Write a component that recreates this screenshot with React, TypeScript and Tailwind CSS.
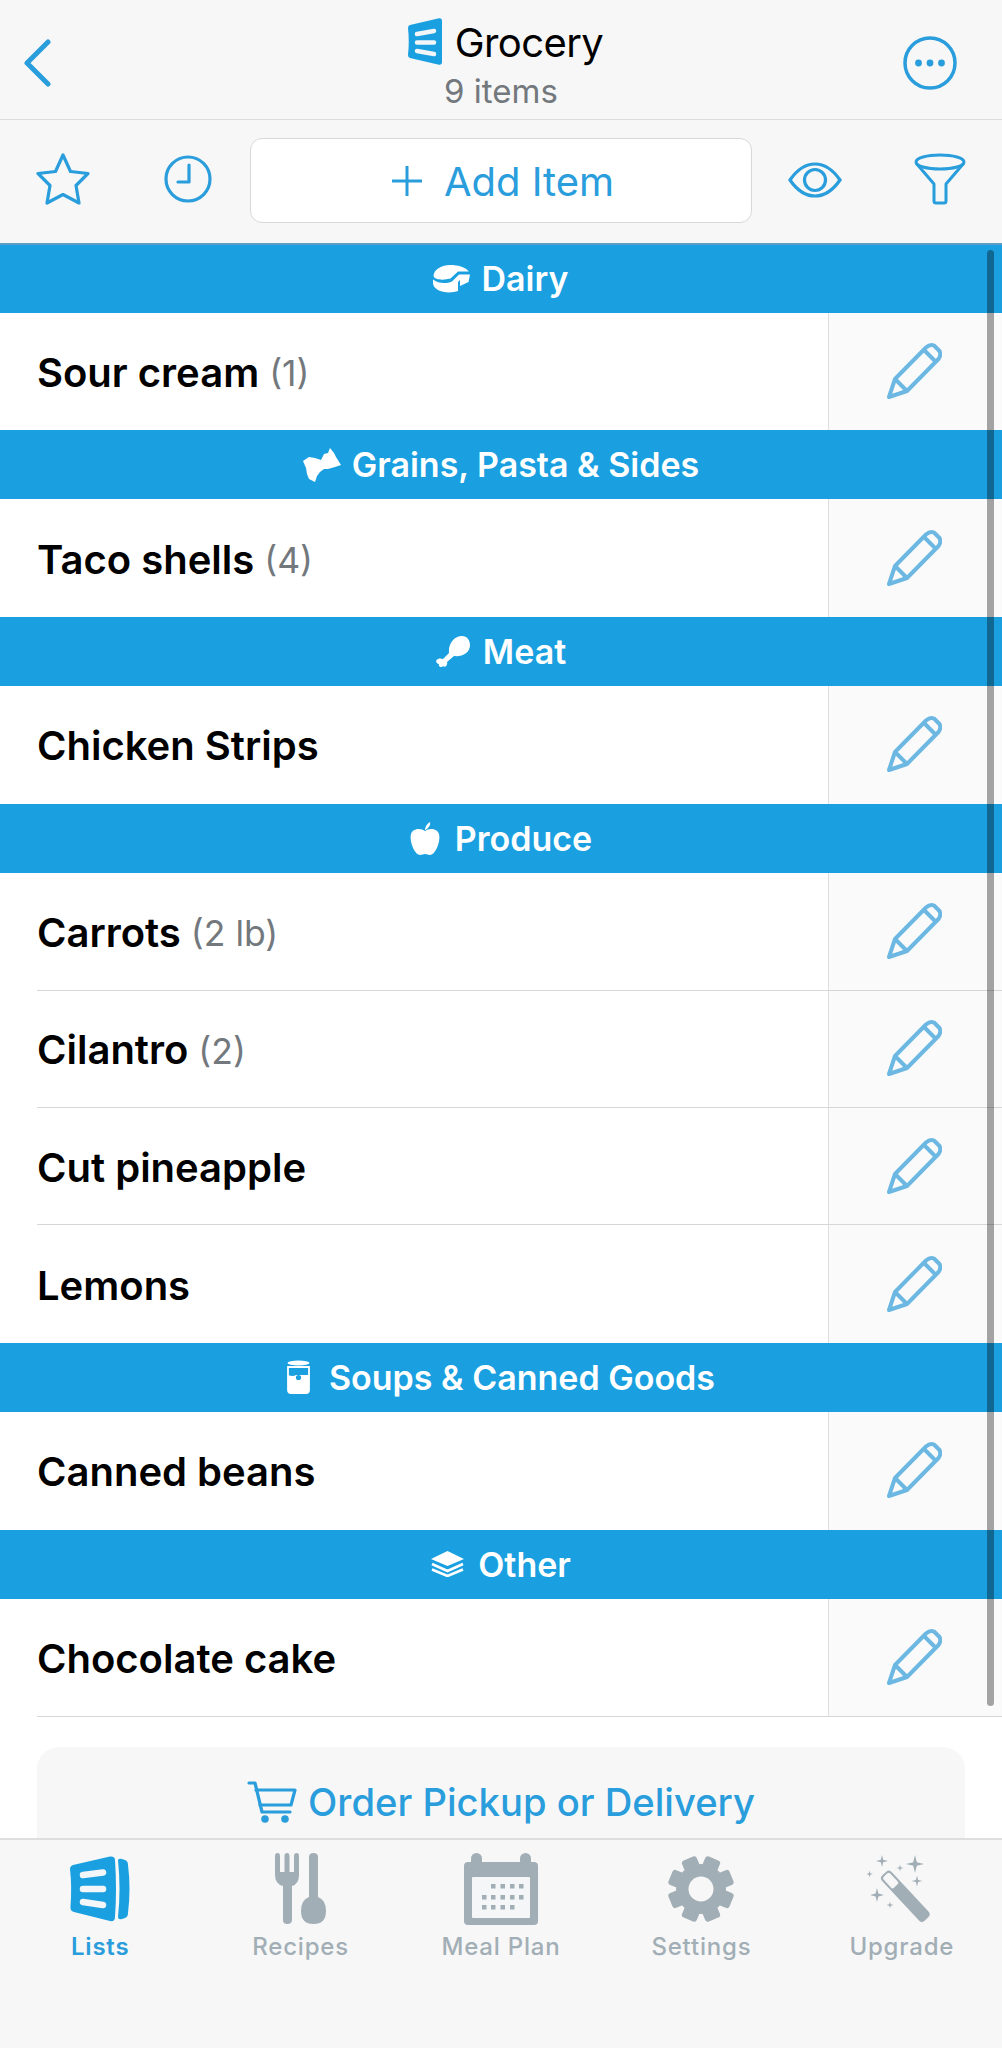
import React from "react";

const BLUE = "#2A9DDC";

function Logo() {
  return (
    <svg width="34" height="47" viewBox="0 0 34 47">
      <path d="M2 7 L31 0.3 Q34 0 34 3 Q35.5 23 34 44 Q34 47 31 46.7 L2 40 Q0 39.5 0 37 Q1.5 24 0 10 Q0 7.5 2 7Z" fill="#1AA0E0" />
      <path d="M9 16 L26 13 M9 24.5 H26 M9 33 L26 36" stroke="#F2F6F8" strokeWidth="4.5" strokeLinecap="round" fill="none" />
    </svg>
  );
}

function Pencil() {
  return (
    <svg width="55" height="56" viewBox="0 0 55 56" fill="none" stroke="#6CB8E3" strokeWidth="4" strokeLinejoin="round">
      <path d="M2 54 L8 36 L39 4.5 Q43 1 47 2.5 L52.5 8 Q54.5 12 51.5 16 L20 48 Z" />
      <path d="M8 36 L20 48 M37 7 L49.5 19.5" />
    </svg>
  );
}

function Cheese() {
  return (
    <svg width="37" height="28" viewBox="0 0 37 28">
      <path d="M0.5 11 C1 4 9 0 17 0 C25 0 32 2 36 6.5 L25 6.5 L17.5 13.5 C10 15.5 2 15 0.5 11Z" fill="#fff" />
      <path d="M0 14.5 C5 18.5 13 19 19 16.5 L26 9.5 L37 9.5 L35.5 17 L27 21 L27 15 L25 17 L25 26 C20 28 10 28 5 25 C2 23 0 21 0 18Z" fill="#fff" />
    </svg>
  );
}

function Bow() {
  return (
    <svg width="38" height="34" viewBox="0 0 38 34">
      <path d="M0 13 L6 9 L12 10 L18 12 L21 6 L25 5 L27 0 L31 5 L33 9 L38 17 L32 19 L25 21 L21 21 L17 24 L14 28 L12 34 L6 31 L4 26 L3 20Z" fill="#fff" />
    </svg>
  );
}

function Drumstick() {
  return (
    <svg width="34" height="32" viewBox="0 0 34 32">
      <path d="M13 17 C12 8 18 0 26 0 C31 0 34 4 34 9 C34 17 26 21 18 20 L11 26 C12 29 9 32 7 30 C6 32 2 31 3 28 C0 28 -1 24 2 23 C4 22 6 23 7 23Z" fill="#fff" />
    </svg>
  );
}

function Apple() {
  return (
    <svg width="30" height="33" viewBox="0 0 30 33">
      <path d="M15 7 C16 3 18 1 20 0 C21 3 18 7 15 8Z" fill="#fff" />
      <path d="M15 9 C19 6 27 6 29 12 C31 20 25 33 20 33 C18 33 17 32 15 32 C13 32 12 33 10 33 C5 33 -1 20 1 12 C3 6 11 6 15 9Z" fill="#fff" />
    </svg>
  );
}

function Can() {
  return (
    <svg width="23" height="34" viewBox="0 0 23 34">
      <ellipse cx="11.5" cy="3" rx="11" ry="2.6" fill="#fff" />
      <path d="M1 7 H22 V30 Q22 33 19 33 H4 Q1 33 1 30Z" fill="none" stroke="#fff" strokeWidth="1.8" />
      <path d="M1 15 Q6 17 9 15 H22 V30 Q22 33 19 33 H4 Q1 33 1 30Z" fill="#fff" />
      <circle cx="11.5" cy="17.5" r="2.6" fill="#1AA0E0" />
    </svg>
  );
}

function Layers() {
  return (
    <svg width="33" height="26" viewBox="0 0 33 26">
      <path d="M16.5 0 L33 8 L16.5 15 L0 8Z" fill="#fff" />
      <path d="M1 13 L16.5 20 L32 13 M1 18.5 L16.5 25 L32 18.5" stroke="#fff" strokeWidth="2.6" fill="none" />
    </svg>
  );
}

function Section({ icon, label, gap, first }: { icon: React.ReactNode; label: string; gap: string; first?: boolean }) {
  return (
    <div className={`h-[69.5px] bg-[#1AA0E0] flex items-center justify-center text-white font-semibold text-[34px] leading-none ${gap} ${first ? "border-t-2 border-[#5E9DC5]" : ""}`}>
      {icon}
      <span className={first ? "" : "mt-[1px]"}>{label}</span>
    </div>
  );
}

function Row({ name, qty, divider }: { name: string; qty?: string; divider?: boolean }) {
  return (
    <div className="h-[117.4px] bg-white flex pl-[37px]">
      <div className={`flex-1 flex items-center pt-[3px] ${divider ? "border-b border-[#d4d6d8]" : ""}`}>
        <span className="text-[40px] font-semibold text-black leading-none">{name}</span>
        {qty && <span className="text-[35.5px] text-[#73787d] leading-none ml-[10px] mt-[2px]">{qty}</span>}
      </div>
      <div className={`w-[174px] bg-[#FAFAFA] border-l border-[#dedfe0] flex items-center justify-center pr-[3px] pb-[1px] ${divider ? "border-b border-b-[#d4d6d8]" : ""}`}>
        <Pencil />
      </div>
    </div>
  );
}

function Gear() {
  const teeth = [0, 45, 90, 135, 180, 225, 270, 315];
  return (
    <svg width="68" height="68" viewBox="0 0 68 68">
      {teeth.map((a) => (
        <rect key={a} x="26" y="1" width="16" height="16" rx="3" fill="#A2AEB6" transform={`rotate(${a + 22.5} 34 34)`} />
      ))}
      <circle cx="34" cy="34" r="25" fill="#A2AEB6" />
      <circle cx="34" cy="34" r="12.5" fill="#F7F7F7" />
    </svg>
  );
}

function Spark({ x, y, r }: { x: number; y: number; r: number }) {
  const k = r * 0.2;
  return (
    <path
      d={`M${x} ${y - r} L${x + k} ${y - k} L${x + r} ${y} L${x + k} ${y + k} L${x} ${y + r} L${x - k} ${y + k} L${x - r} ${y} L${x - k} ${y - k}Z`}
      fill="#A2AEB6"
    />
  );
}

function TabIcon({ kind }: { kind: string }) {
  if (kind === "lists")
    return (
      <svg width="60" height="66" viewBox="0 0 60 66">
        <path d="M3 9 L40 0.5 Q45 0 45 4 Q47 33 45 61 Q45 66 40 65 L4 56 Q0 55 0.5 51 Q2 30 0 13 Q0 10 3 9Z" fill="#1AA0E0" />
        <path d="M48 4 Q49 2 52 3 L55 4 Q58 5 58 9 Q61 32 58 57 Q58 61 55 62 L52 63 Q48 64 48 61 Q51 33 48 4Z" fill="#1AA0E0" />
        <path d="M13 19 L33 16.5 M13 33 H33 M13 46 L33 49" stroke="#F2F6F8" strokeWidth="6.5" strokeLinecap="round" fill="none" />
      </svg>
    );
  if (kind === "recipes")
    return (
      <svg width="52" height="72" viewBox="0 0 52 72">
        <path d="M0 3 Q0 0 2.5 0 Q5 0 5 3 V19 H9.5 V3 Q9.5 0 12 0 Q14.5 0 14.5 3 V19 H19 V3 Q19 0 21.5 0 Q24 0 24 3 V22 Q24 31 17 33 V67 Q17 71 12 71 Q8 71 8 67 V33 Q0 31 0 22Z" fill="#A2AEB6" />
        <path d="M34 4 Q34 0 38.5 0 Q43 0 43 4 V44 Q51 47 51 58 Q51 71 38.5 71 Q26 71 26 58 Q26 47 34 44Z" fill="#A2AEB6" />
      </svg>
    );
  if (kind === "plan") {
    const rows = [
      { y: 31, xs: [27, 36.5, 46, 55] },
      { y: 42, xs: [18, 27, 36.5, 46, 55] },
      { y: 52, xs: [18, 27, 36.5, 46] },
    ];
    return (
      <svg width="74" height="72" viewBox="0 0 74 72">
        <rect x="0" y="9" width="74" height="63" rx="4" fill="#A2AEB6" />
        <rect x="7" y="0" width="11" height="18" rx="5.5" fill="#A2AEB6" />
        <rect x="56" y="0" width="11" height="18" rx="5.5" fill="#A2AEB6" />
        <rect x="8" y="24" width="58" height="41" rx="1" fill="#F5F6F7" />
        {rows.map((r) =>
          r.xs.map((x) => <rect key={`${r.y}-${x}`} x={x} y={r.y} width="4.5" height="4.5" fill="#A2AEB6" />)
        )}
      </svg>
    );
  }
  if (kind === "settings") return <Gear />;
  return (
    <svg width="70" height="69" viewBox="0 0 70 69">
      <Spark x={15} y={6} r={6} />
      <Spark x={48} y={9} r={9} />
      <Spark x={33} y={13} r={3.5} />
      <Spark x={50} y={26} r={5.5} />
      <Spark x={2.5} y={19} r={3.5} />
      <Spark x={10} y={40} r={7} />
      <Spark x={23} y={50} r={3.5} />
      <g transform="rotate(-43 39 42)">
        <rect x="32.5" y="10" width="13" height="62" rx="4" fill="#A2AEB6" />
        <rect x="34.5" y="12" width="9" height="15" rx="2" fill="#F7F7F7" />
      </g>
    </svg>
  );
}

function Tab({ kind, label, active }: { kind: string; label: string; active?: boolean }) {
  return (
    <div className="flex flex-col items-center">
      <div className="h-[72px] flex items-center justify-center">
        <TabIcon kind={kind} />
      </div>
      <span className={`mt-[10px] text-[24px] leading-none font-medium tracking-[0.8px] ${active ? "text-[#2A9DDC] font-semibold" : "text-[#A2AEB6]"}`}>
        {label}
      </span>
    </div>
  );
}

export default function App() {
  return (
    <div className="w-[1002px] h-[2048px] flex flex-col overflow-hidden bg-white font-['Inter',sans-serif]">
      <header className="h-[120px] shrink-0 bg-[#F7F7F7] border-b border-[#dcdcdc] pt-[6px] grid grid-cols-[1fr_auto_1fr] items-center">
        <div className="pl-[23px]">
          <svg width="28" height="48" viewBox="0 0 28 48" fill="none" stroke={BLUE} strokeWidth="5" strokeLinecap="round" strokeLinejoin="round">
            <path d="M25 3 L4 24 L25 45" />
          </svg>
        </div>
        <div className="flex flex-col items-center">
          <div className="flex items-center gap-[13px] h-[47px] ml-[9px]">
            <Logo />
            <span className="text-[40px] leading-none text-black tracking-[-0.6px] mt-[3px]">Grocery</span>
          </div>
          <span className="text-[33px] leading-none text-[#73787d] mt-[10px]">9 items</span>
        </div>
        <div className="flex justify-end pr-[45px]">
          <svg width="54" height="54" viewBox="0 0 54 54" fill="none">
            <circle cx="27" cy="27" r="25" stroke={BLUE} strokeWidth="3.5" />
            <circle cx="15.5" cy="27" r="3.4" fill={BLUE} />
            <circle cx="27" cy="27" r="3.4" fill={BLUE} />
            <circle cx="38.5" cy="27" r="3.4" fill={BLUE} />
          </svg>
        </div>
      </header>

      <div className="h-[123px] shrink-0 bg-[#F7F7F7] grid grid-cols-[125px_125px_1fr_125px_125px] items-center">
        <div className="flex justify-center pb-[5px]">
          <svg width="54" height="52" viewBox="0 0 54 52" fill="none" stroke={BLUE} strokeWidth="3.2" strokeLinejoin="round">
            <path d="M27 2 L34.5 18.5 L52 20.5 L40 32.5 L43 50 L27 41.5 L11 50 L14 32.5 L2 20.5 L19.5 18.5Z" />
          </svg>
        </div>
        <div className="flex justify-center pb-[5px]">
          <svg width="48" height="48" viewBox="0 0 48 48" fill="none" stroke={BLUE} strokeWidth="3.2">
            <circle cx="24" cy="24" r="22" />
            <path d="M25 10 V27 H14" strokeLinecap="round" strokeLinejoin="round" />
          </svg>
        </div>
        <div className="h-[85px] mb-[2px] bg-white border border-[#d8d8d8] rounded-[12px] flex items-center justify-center gap-[21px] pl-[3px]">
          <svg width="32" height="32" viewBox="0 0 32 32" fill="none" stroke={BLUE} strokeWidth="3">
            <path d="M16 1 V31 M1 16 H31" />
          </svg>
          <span className="text-[40px] leading-none text-[#2A9DDC] mt-[2px]">Add Item</span>
        </div>
        <div className="flex justify-center pb-[3px]">
          <svg width="54" height="36" viewBox="0 0 54 36" fill="none" stroke={BLUE} strokeWidth="3.2">
            <path d="M2 18 Q13 2 27 2 Q41 2 52 18 Q41 34 27 34 Q13 34 2 18Z" />
            <circle cx="27" cy="18" r="10.5" />
          </svg>
        </div>
        <div className="flex justify-center pb-[5px]">
          <svg width="52" height="52" viewBox="0 0 52 52" fill="none" stroke={BLUE} strokeWidth="3" strokeLinejoin="round">
            <ellipse cx="26" cy="9" rx="24" ry="7" />
            <path d="M2 10 L20 31 V48 Q20 50 22 50 H30 Q32 50 32 48 V31 L50 10" />
          </svg>
        </div>
      </div>

      <main className="relative flex-1 min-h-0 overflow-hidden bg-white">
        <Section first icon={<Cheese />} label="Dairy" gap="gap-[11px]" />
        <Row name="Sour cream" qty="(1)" />
        <Section icon={<Bow />} label="Grains, Pasta & Sides" gap="gap-[11px]" />
        <Row name="Taco shells" qty="(4)" />
        <Section icon={<Drumstick />} label="Meat" gap="gap-[13px]" />
        <Row name="Chicken Strips" />
        <Section icon={<Apple />} label="Produce" gap="gap-[15px]" />
        <Row name="Carrots" qty="(2 lb)" divider />
        <Row name="Cilantro" qty="(2)" divider />
        <Row name="Cut pineapple" divider />
        <Row name="Lemons" />
        <Section icon={<Can />} label="Soups & Canned Goods" gap="gap-[19px]" />
        <Row name="Canned beans" />
        <Section icon={<Layers />} label="Other" gap="gap-[14px]" />
        <Row name="Chocolate cake" divider />
        <div className="mx-[37px] mt-[30px] h-[120px] bg-[#F7F7F7] rounded-t-[22px] flex items-start justify-center gap-[11px] pt-[34px]">
          <svg width="50" height="42" viewBox="0 0 50 42" fill="none" stroke={BLUE} strokeWidth="3.2" strokeLinecap="round" strokeLinejoin="round">
            <path d="M2 2 H8 L15 31 H43" />
            <path d="M9 9 H48 L44 24 H13" />
            <circle cx="18" cy="38" r="2.2" fill={BLUE} />
            <circle cx="38" cy="38" r="2.2" fill={BLUE} />
          </svg>
          <span className="text-[38.2px] leading-[42px] font-medium text-[#2A9DDC]">Order Pickup or Delivery</span>
        </div>
        <div className="absolute top-[7px] left-[987px] w-[7px] h-[1456px] rounded-full bg-black/35" />
      </main>

      <nav className="h-[210px] shrink-0 bg-[#F7F7F7] border-t-2 border-[#dedede] grid grid-cols-5 pt-[13px] items-start">
        <Tab kind="lists" label="Lists" active />
        <Tab kind="recipes" label="Recipes" />
        <Tab kind="plan" label="Meal Plan" />
        <Tab kind="settings" label="Settings" />
        <Tab kind="upgrade" label="Upgrade" />
      </nav>
    </div>
  );
}
